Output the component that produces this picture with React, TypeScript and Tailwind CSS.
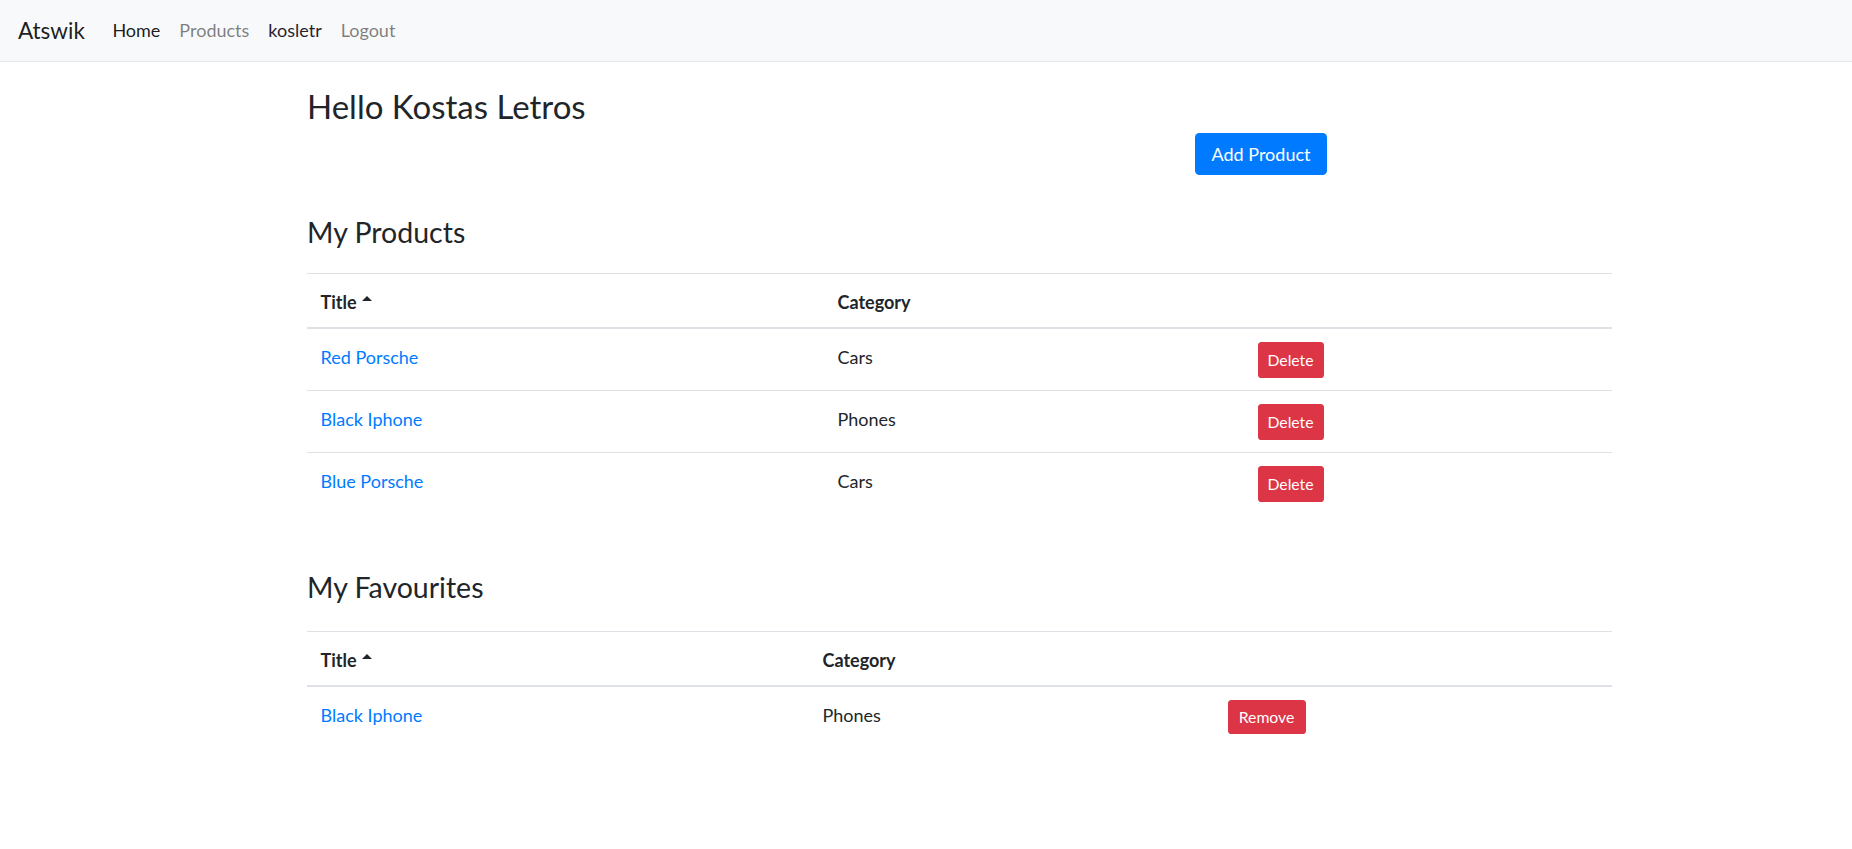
import React from "react";

type Row = { title: string; category: string };

const myProducts: Row[] = [
  { title: "Red Porsche", category: "Cars" },
  { title: "Black Iphone", category: "Phones" },
  { title: "Blue Porsche", category: "Cars" },
];

const myFavourites: Row[] = [{ title: "Black Iphone", category: "Phones" }];

function SortCaret() {
  return (
    <span className="ml-[5px] inline-block h-0 w-0 border-x-[5.5px] border-b-[5px] border-x-transparent border-b-[#212529] align-[8px]" />
  );
}

function ProductTable({
  rows,
  titleW,
  catW,
  action,
}: {
  rows: Row[];
  titleW: string;
  catW: string;
  action: "Delete" | "Remove";
}) {
  const th =
    "border-t border-b-2 border-[#dee2e6] px-[13.5px] pt-[15px] pb-[11px] text-left align-top font-bold leading-[27px]";
  const td = "border-t border-[#dee2e6] px-[13.5px] pt-[14.5px] pb-[10.5px] align-top leading-[27px]";
  const tdBtn = "border-t border-[#dee2e6] px-[13.5px] py-[12.5px] align-top";
  const btn =
    action === "Delete"
      ? "h-[36px] w-[66px] rounded-[3.6px] bg-[#dc3545] text-[15.75px] leading-none text-white"
      : "h-[34px] w-[78px] rounded-[3.6px] bg-[#dc3545] text-[15.75px] leading-none text-white";

  return (
    <table className="w-full table-fixed border-collapse text-[18px] text-[#212529]">
      <thead>
        <tr>
          <th className={`${th} ${titleW}`}>
            Title
            <SortCaret />
          </th>
          <th className={`${th} ${catW}`}>Category</th>
          <th className={th}></th>
        </tr>
      </thead>
      <tbody>
        {rows.map((r) => (
          <tr key={r.title}>
            <td className={td}>
              <a href="#" className="text-[#007bff]">
                {r.title}
              </a>
            </td>
            <td className={td}>{r.category}</td>
            <td className={tdBtn}>
              <button type="button" className={btn}>
                {action}
              </button>
            </td>
          </tr>
        ))}
      </tbody>
    </table>
  );
}

export default function App() {
  return (
    <div className="min-h-[849px] bg-white font-['Lato','Liberation_Sans',sans-serif] text-[18px] text-[#212529]">
      <nav className="flex h-[62px] items-center border-b border-[#e6e6e6] bg-[#f8f9fa] pl-[18px]">
        <a href="#" className="mr-[18px] text-[22.5px] leading-[1.5] text-[rgba(0,0,0,0.9)]">
          Atswik
        </a>
        <a href="#" className="px-[9.5px] leading-[27px] text-[rgba(0,0,0,0.9)]">
          Home
        </a>
        <a href="#" className="px-[9.5px] leading-[27px] text-[rgba(0,0,0,0.5)]">
          Products
        </a>
        <a href="#" className="px-[9.5px] leading-[27px] text-[#2a1f33]">
          kosletr
        </a>
        <a href="#" className="px-[9.5px] leading-[27px] text-[rgba(0,0,0,0.5)]">
          Logout
        </a>
      </nav>

      <main className="ml-[307px] w-[1305px]">
        <h2 className="mt-[23px] text-[33px] leading-[43px] font-normal">Hello Kostas Letros</h2>
        <div className="mt-[5px] flex">
          <button
            type="button"
            className="ml-[888px] h-[42px] w-[132px] rounded-[4.5px] bg-[#007bff] text-[18px] text-white"
          >
            Add Product
          </button>
        </div>

        <h3 className="mt-[38px] text-[28.5px] leading-[38px] font-normal">My Products</h3>
        <div className="mt-[22px]">
          <ProductTable rows={myProducts} titleW="w-[517px]" catW="w-[420px]" action="Delete" />
        </div>

        <h3 className="mt-[54px] text-[28.5px] leading-[38px] font-normal">My Favourites</h3>
        <div className="mt-[25px]">
          <ProductTable rows={myFavourites} titleW="w-[502px]" catW="w-[405px]" action="Remove" />
        </div>
      </main>
    </div>
  );
}
